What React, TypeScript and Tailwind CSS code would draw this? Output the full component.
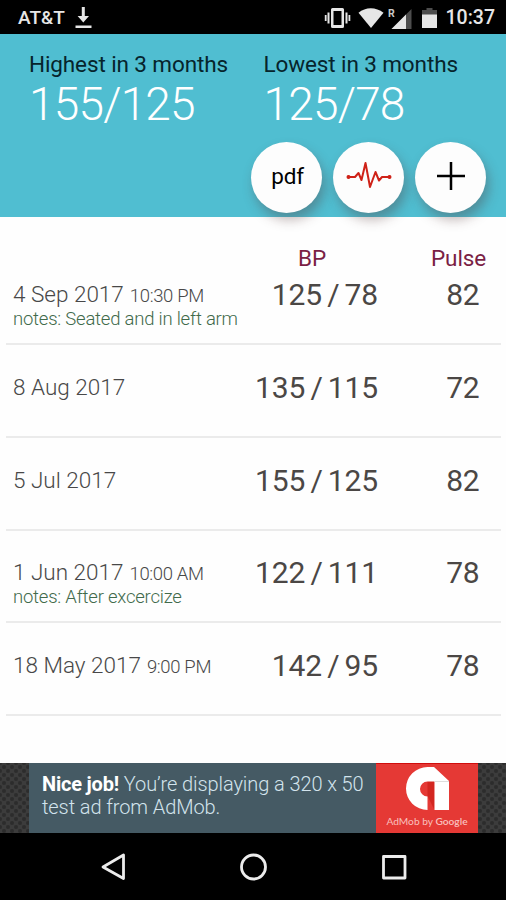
import clsx from "clsx"

type Reading = {
    date: string
    time?: string
    notes?: string
    bp: string
    pulse: number
}

const readings: Reading[] = [
    { date: "4 Sep 2017", time: "10:30 PM", notes: "Seated and in left arm", bp: "125 / 78", pulse: 82 },
    { date: "8 Aug 2017", bp: "135 / 115", pulse: 72 },
    { date: "5 Jul 2017", bp: "155 / 125", pulse: 82 },
    { date: "1 Jun 2017", time: "10:00 AM", notes: "After excercize", bp: "122 / 111", pulse: 78 },
    { date: "18 May 2017", time: "9:00 PM", bp: "142 / 95", pulse: 78 },
]

function StatusBar() {
    return (
        <div className="flex h-[34px] items-center bg-black pt-[2px] pr-[11px] pl-[18px] text-[#e6e6e6]">
            <span className="pb-[1px] text-[19px] leading-none font-medium">AT&amp;T</span>
            <svg className="ml-[10px] h-[22px] w-[17px]" viewBox="0 0 17 22" fill="currentColor">
                <path d="M6.8 0h3v9H14l-5.7 6.500L2.6 9h4.2z" />
                <path d="M.5 18.500h16v2.500H.5z" />
            </svg>
            <div className="ml-auto flex items-center">
                {/* vibrate */}
                <svg className="h-[20px] w-[28px]" viewBox="0 0 28 20" fill="currentColor">
                    <path fillRule="evenodd" d="M8.5 0h10a1.5 1.5 0 0 1 1.5 1.5v17a1.5 1.5 0 0 1-1.5 1.5h-10A1.5 1.5 0 0 1 7 18.5v-17A1.5 1.5 0 0 1 8.5 0zM9.5 3v14h8V3z" />
                    <path d="M3.5 4.500h2v11h-2zM.8 7h1.800v6H.8zM21.500 4.500h2v11h-2zM24.500 7h1.800v6h-1.800z" />
                </svg>
                {/* wifi */}
                <svg className="ml-[6px] h-[20px] w-[26px]" viewBox="0 0 26 20" fill="currentColor">
                    <path d="M.5 4.800C7.500-1.200 18-1.200 25.500 4.800L13 20z" />
                </svg>
                {/* roaming signal */}
                <svg className="ml-[4px] h-[21px] w-[24px]" viewBox="0 0 24 21">
                    <path d="M23.500 1v20h-20z" fill="#4d4d4d" />
                    <path d="M18 6.500V21H3.500z" fill="currentColor" />
                    <text x="0" y="9" fontSize="10.500" fontWeight="700" fill="#c9c9c9">R</text>
                </svg>
                {/* battery */}
                <svg className="ml-[10px] h-[20px] w-[15px]" viewBox="0 0 15 20">
                    <path d="M4.500 0h6v2H15v5H0V2h4.500z" fill="#4d4d4d" />
                    <path d="M0 6.500h15V20H0z" fill="currentColor" />
                </svg>
                <span className="ml-[9px] pb-[1px] text-[19.500px] leading-none font-medium">10:37</span>
            </div>
        </div>
    )
}

function Summary({ label, value }: { label: string; value: string }) {
    return (
        <div className="w-[234.5px]">
            <p className="text-[22.5px] leading-[26px] tracking-[-0.11px] whitespace-nowrap text-[#06242c]">{label}</p>
            <p className="text-[46px] leading-[54px] font-light tracking-[-0.8px] text-white">{value}</p>
        </div>
    )
}

function RoundButton({ children }: { children: React.ReactNode }) {
    return (
        <button className="flex size-[71px] items-center justify-center rounded-full bg-[#fdfdfd] shadow-[3px_7px_12px_rgba(80,50,50,0.35)]">
            {children}
        </button>
    )
}

function Header() {
    return (
        <div className="h-[183px] bg-[#50bed1] pt-[17px]">
            <div className="flex pl-[29px]">
                <Summary label="Highest in 3 months" value="155/125" />
                <Summary label="Lowest in 3 months" value="125/78" />
            </div>
            <div className="mt-[11px] flex justify-end gap-[11px] pr-[20px]">
                <RoundButton>
                    <span className="pb-[3px] pl-[2px] text-[22.500px] leading-none tracking-[-0.2px] text-black">pdf</span>
                </RoundButton>
                <RoundButton>
                    <svg className="mb-[5px] h-[28px] w-[46px]" viewBox="0 0 46 28" fill="none" stroke="#cf2218" strokeWidth="2" strokeLinejoin="round">
                        <path d="M2 16h7l3.500-4 3 7L19.500 2l4.500 24 5.500-15 3.500 8.500 3-3.500H44" />
                        <circle cx="2.500" cy="16" r="1.400" fill="#cf2218" stroke="none" />
                        <circle cx="43.500" cy="16" r="1.400" fill="#cf2218" stroke="none" />
                        <circle cx="2.500" cy="16" r="2" fill="#cf2218" stroke="none" />
                        <circle cx="43.500" cy="16" r="2" fill="#cf2218" stroke="none" />
                    </svg>
                </RoundButton>
                <RoundButton>
                    <svg className="mb-[3px] size-[28px]" viewBox="0 0 28 28" stroke="#000" strokeWidth="2.500">
                        <path d="M14 0v28M0 14h28" />
                    </svg>
                </RoundButton>
            </div>
        </div>
    )
}

function ReadingRow({ reading, first }: { reading: Reading; first: boolean }) {
    return (
        <div className={clsx("mr-[5px] ml-[6px] flex flex-col justify-end border-b-2 border-[#ebebeb]", first ? "h-[74px]" : "h-[92.8px]")}>
            <div className="flex h-[72px] pl-[7px]">
                <div className="w-[235px] whitespace-nowrap">
                    <p className="h-[36px] text-[22.5px] leading-[46px] font-light text-[#484848]">
                        {reading.date}
                        {reading.time && <span className="ml-[6px] text-[18.5px] tracking-[-0.35px]">{reading.time}</span>}
                    </p>
                    {reading.notes && (
                        <p className="text-[18.5px] leading-[24px] font-light tracking-[-0.22px] text-[#416a4b]">notes: {reading.notes}</p>
                    )}
                </div>
                <p className="w-[130px] text-right text-[30px] leading-[47px] tracking-[-0.1px] whitespace-nowrap text-[#4b4745] [word-spacing:-2.3px]">{reading.bp}</p>
                <p className="w-[101px] text-right text-[30px] leading-[47px] tracking-[-0.5px] text-[#4b4745]">{reading.pulse}</p>
            </div>
        </div>
    )
}

function AdBanner() {
    return (
        <div className="flex h-[70px] bg-[#3c3c3c] bg-[radial-gradient(#2c2c2c_25%,transparent_45%),radial-gradient(#2c2c2c_25%,transparent_45%)] bg-[length:8px_8px] bg-[position:0_0,4px_4px]">
            <div className="ml-[29px] w-[347px] bg-[#455a64] pt-[10px] pl-[13px] text-[20px] leading-[23px] tracking-[-0.09px] whitespace-nowrap text-[#d3e4ed]">
                <p>
                    <b className="font-bold tracking-[-0.2px] text-white">Nice job!</b> <span className="font-light">You’re displaying a 320 x 50</span>
                </p>
                <p className="font-light">test ad from AdMob.</p>
            </div>
            <div className="flex w-[102px] flex-col items-center border-t border-[#d00d0d] bg-[#e53935] pt-[3px]">
                <svg className="h-[43px] w-[43px]" viewBox="0 0 43 43">
                    <path d="M21.5 14v15l7 14V14z" fill="#d32620" />
                    <path d="M21.500 0H28L43 14V43H28.500V14.500H21.500a7.500 7.500 0 0 0 0 15V43A21.500 21.500 0 0 1 21.500 0z" fill="#fff" />
                    <path d="M28.500 14.500H43" stroke="#ddd" strokeWidth="1" />
                </svg>
                <p className="mt-[4px] text-[10.2px] leading-[14px] whitespace-nowrap text-[#f9c0be] [font-family:Lato,sans-serif]">
                    AdMob by <span className="font-semibold">Google</span>
                </p>
            </div>
        </div>
    )
}

function NavBar() {
    return (
        <div className="flex h-[67px] items-center justify-center bg-black">
            <svg className="h-[30px] w-[310px]" viewBox="0 0 310 30" fill="none" stroke="#ececec" strokeWidth="2.8" strokeLinejoin="round">
                <path d="M25.500 3v23.500L5 15z" />
                <circle cx="155.500" cy="15" r="12" />
                <rect x="285.500" y="4.500" width="21.500" height="21.500" />
            </svg>
        </div>
    )
}

function App() {
    return (
        <div className="flex h-[900px] w-[506px] flex-col overflow-hidden bg-[#fefefe] [font-family:Roboto,sans-serif]">
            <StatusBar />
            <Header />
            <div className="flex-1">
                <div className="flex h-[54px] pt-[28px] text-[22.5px] leading-[26px] tracking-[-0.1px] text-[#7a1f45]">
                    <span className="ml-[298px] w-[133px]">BP</span>
                    <span>Pulse</span>
                </div>
                {readings.map((reading, i) => (
                    <ReadingRow key={reading.date} reading={reading} first={i === 0} />
                ))}
            </div>
            <AdBanner />
            <NavBar />
        </div>
    )
}

export default App
